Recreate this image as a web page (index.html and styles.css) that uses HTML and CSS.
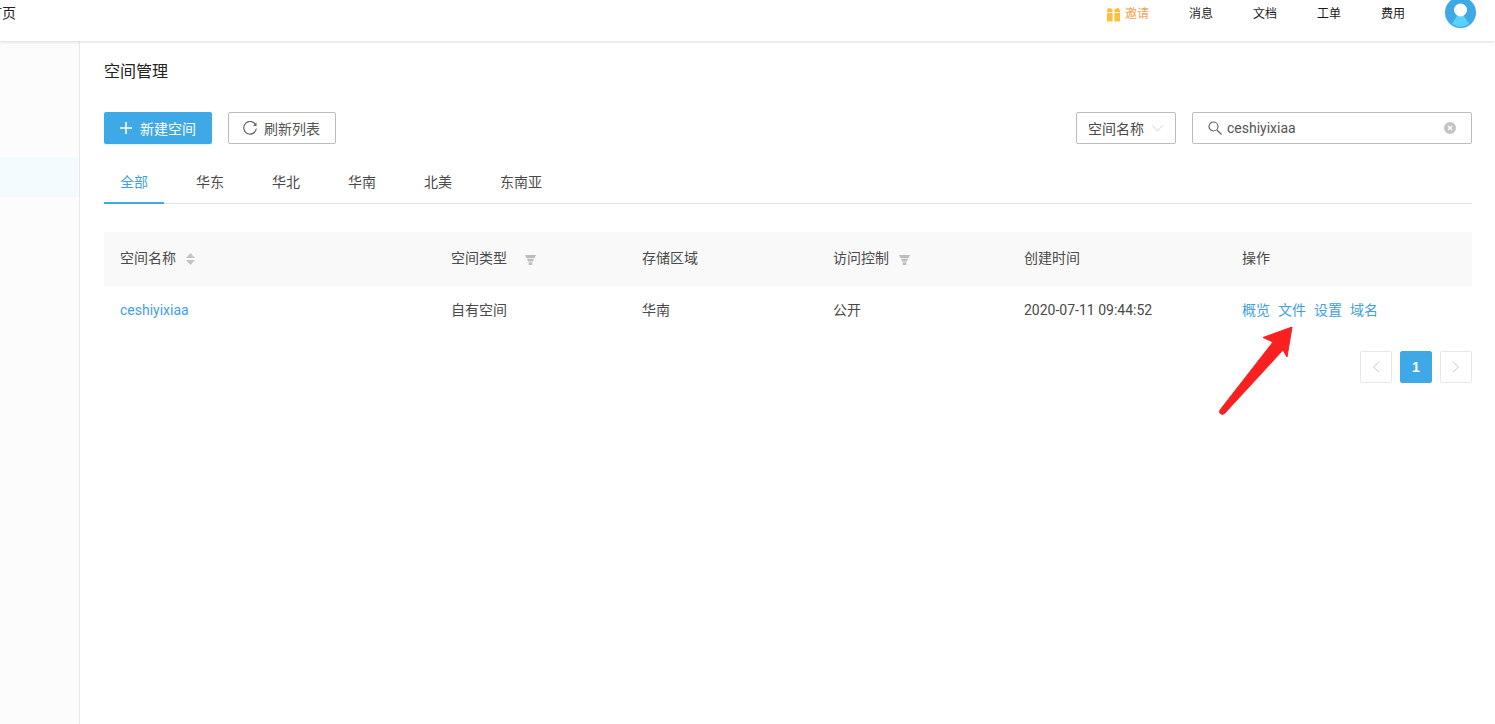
FILE: index.html
```html
<!DOCTYPE html>
<html lang="zh-CN">
<head>
  <meta charset="UTF-8" />
  <title>空间管理</title>
  <link rel="stylesheet" href="styles.css">
</head>
<body>

  <header class="topbar">
    <a class="home-link">首页</a>
    <nav class="top-nav">
      <a class="invite">
        <svg width="13" height="15" viewBox="0 0 14 15"><path fill="#fdbf3c" d="M0 6h6v9H1a1 1 0 0 1-1-1zM8 6h6v8a1 1 0 0 1-1 1H8zM2 0l4 2v3H0V3zM12 0 8 2v3h6V3z"/></svg>
        <span>邀请</span>
      </a>
      <a>消息</a>
      <a>文档</a>
      <a>工单</a>
      <a>费用</a>
      <span class="avatar">
        <svg width="31" height="31" viewBox="0 0 31 31">
          <circle cx="15.5" cy="15.5" r="15.5" fill="#3fa9e8"/>
          <path fill="#5ad2ff" d="M7 27l5-8h7l5 8a15.500 15.500 0 0 1-17 0z"/>
          <circle cx="15.500" cy="13" r="6.500" fill="#fff"/>
        </svg>
      </span>
    </nav>
  </header>

  <div class="layout">
    <aside class="sidebar">
      <div class="side-active"></div>
    </aside>

    <main class="content">
      <h1 class="page-title">空间管理</h1>

      <div class="toolbar">
        <button class="btn btn-primary">
          <svg width="12" height="12" viewBox="0 0 12 12"><path stroke="#fff" stroke-width="1.600" d="M6 0v12M0 6h12"/></svg>
          新建空间
        </button>
        <button class="btn btn-plain">
          <svg width="14" height="14" viewBox="0 0 14 14"><path fill="none" stroke="#666" stroke-width="1.200" d="M12.900 4.500A6.300 6.300 0 1 0 13.300 7.500"/><path fill="#666" d="M13.500 1.500v3.600H10z"/></svg>
          刷新列表
        </button>
        <div class="search-group">
          <div class="select">
            <span>空间名称</span>
            <svg width="11" height="7" viewBox="0 0 11 7"><path fill="none" stroke="#d4d4d4" d="M.5.500l5 5.500 5-5.500"/></svg>
          </div>
          <div class="search">
            <svg width="14" height="14" viewBox="0 0 14 14"><circle cx="5.500" cy="5.500" r="4.500" fill="none" stroke="#666" stroke-width="1.200"/><path stroke="#666" stroke-width="1.300" d="M9 9l4.500 4.500"/></svg>
            <span class="search-text">ceshiyixiaa</span>
            <svg class="search-clear" width="12" height="12" viewBox="0 0 12 12"><circle cx="6" cy="6" r="6" fill="#c4c4c4"/><path stroke="#fff" stroke-width="1.200" d="M4 4l4 4M8 4l-4 4"/></svg>
          </div>
        </div>
      </div>

      <ul class="tabs">
        <li class="tab active">全部</li>
        <li class="tab">华东</li>
        <li class="tab">华北</li>
        <li class="tab">华南</li>
        <li class="tab">北美</li>
        <li class="tab">东南亚</li>
      </ul>

      <table class="bucket-table">
        <colgroup>
          <col class="col-name"><col class="col-mid"><col class="col-mid"><col class="col-mid"><col class="col-time"><col class="col-ops">
        </colgroup>
        <thead>
          <tr>
            <th>空间名称
              <svg class="th-icon" width="9" height="12" viewBox="0 0 9 12"><path fill="#c4c4c4" d="M4.500 0 9 5H0zM0 7h9l-4.500 5z"/></svg>
            </th>
            <th>空间类型
              <svg class="th-icon th-filter" width="11" height="10" viewBox="0 0 11 10"><path fill="#bdbdbd" d="M0 0h11L9.500 3h-8zM2 3.700h7L7.800 6.500H3.200zM3.700 7.200h3.600V10H3.700z"/></svg>
            </th>
            <th>存储区域</th>
            <th>访问控制
              <svg class="th-icon" width="11" height="10" viewBox="0 0 11 10"><path fill="#bdbdbd" d="M0 0h11L9.500 3h-8zM2 3.700h7L7.800 6.500H3.200zM3.700 7.200h3.600V10H3.700z"/></svg>
            </th>
            <th>创建时间</th>
            <th>操作</th>
          </tr>
        </thead>
        <tbody>
          <tr>
            <td><a class="link">ceshiyixiaa</a></td>
            <td>自有空间</td>
            <td>华南</td>
            <td>公开</td>
            <td>2020-07-11 09:44:52</td>
            <td>
              <div class="ops">
                <a class="link">概览</a>
                <a class="link">文件</a>
                <a class="link">设置</a>
                <a class="link">域名</a>
              </div>
            </td>
          </tr>
        </tbody>
      </table>

      <div class="pager">
        <span class="page-btn">
          <svg width="8" height="12" viewBox="0 0 8 12"><path fill="none" stroke="#c9c9c9" d="M7 1 1.500 6 7 11"/></svg>
        </span>
        <span class="page-btn current">1</span>
        <span class="page-btn">
          <svg width="8" height="12" viewBox="0 0 8 12"><path fill="none" stroke="#c9c9c9" d="M1 1l5.500 5L1 11"/></svg>
        </span>
      </div>
    </main>
  </div>

  <!-- red arrow drawn on top of the screenshot -->
  <svg class="annotation" width="80" height="94" viewBox="0 0 80 94">
    <path fill="#f92020" stroke="#f92020" stroke-linejoin="round" d="M74 2 L69 32 L65 25 L7 88 Q4 91 2 88 Q1 87 2 85 L55 17 L45 12.500 Z"/>
  </svg>

</body>
</html>
```

FILE: styles.css
```css
* {
  box-sizing: border-box;
}
html, body {
  height: 100%;
}
body {
  margin: 0;
  font-family: Roboto, "Noto Sans CJK SC", sans-serif;
  font-size: 14px;
  color: #4a4a4a;
  background: white;
  overflow: hidden;
}

/* top bar */
.topbar {
  height: 41px;
  display: flex;
  justify-content: space-between;
  background: white;
  box-shadow: 0 1px 3px rgba(0, 0, 0, 0.14);
  position: relative;
  overflow: hidden;
}
.home-link {
  margin: 3px 0 0 -12px;
  line-height: 20px;
  font-size: 14px;
  color: #222;
}
.top-nav {
  display: flex;
  align-items: flex-start;
  padding-right: 19px;
}
.top-nav a {
  margin-left: 40px;
  font-size: 12px;
  line-height: 28px;
  color: #1a1a1a;
}
.top-nav .invite {
  display: flex;
  align-items: center;
  gap: 5px;
  color: #f7a24b;
}
.avatar {
  margin: -3px 0 0 40px;
  height: 31px;
}

/* page layout */
.layout {
  display: flex;
  height: 683px;
}
.sidebar {
  width: 80px;
  padding-top: 116px;
  background: #fcfcfc;
  border-right: 1px solid #e8e8e8;
}
.side-active {
  height: 40px;
  background: #f4fbff;
}
.content {
  flex: 1;
  padding: 0 23px 0 24px;
}
.page-title {
  margin: 19px 0 0;
  font-size: 16px;
  font-weight: 400;
  line-height: 24px;
  color: #222;
}

/* toolbar */
.toolbar {
  display: flex;
  margin-top: 28px;
}
.btn {
  height: 32px;
  display: flex;
  align-items: center;
  border-radius: 2px;
  font-family: inherit;
  font-size: 14px;
  padding: 0;
}
.btn-primary {
  width: 108px;
  gap: 8px;
  padding-left: 16px;
  color: white;
  background: #3fa9e8;
  border: none;
  box-shadow: 0 1px 2px rgba(63, 169, 232, 0.2);
}
.btn-plain {
  width: 108px;
  gap: 7px;
  margin-left: 16px;
  padding-left: 14px;
  color: #555;
  background: white;
  border: 1px solid #bbb;
}
.search-group {
  display: flex;
  margin-left: auto;
}
.select {
  width: 100px;
  height: 32px;
  display: flex;
  align-items: center;
  justify-content: space-between;
  padding: 0 12px 0 11px;
  border: 1px solid #bbb;
  border-radius: 2px;
}
.search {
  width: 280px;
  height: 32px;
  margin-left: 16px;
  display: flex;
  align-items: center;
  gap: 5px;
  padding: 0 15px;
  border: 1px solid #bbb;
  border-radius: 2px;
}
.search-text {
  flex: 1;
  color: #555;
}

/* tabs */
.tabs {
  list-style: none;
  display: flex;
  margin: 16px 0 0;
  padding: 0;
  height: 44px;
  border-bottom: 1px solid #e4e4e4;
}
.tab {
  padding: 0 16px;
  margin-right: 16px;
  line-height: 44px;
  height: 44px;
  color: #4a4a4a;
}
.tab.active {
  color: #3fa0e6;
  border-bottom: 2px solid #3fa9e8;
}

/* table */
.bucket-table {
  width: 100%;
  margin-top: 28px;
  border-collapse: collapse;
  table-layout: fixed;
}
.col-name { width: 331px; }
.col-mid { width: 191px; }
.col-time { width: 218px; }
.col-ops { width: 246px; }
.bucket-table th {
  height: 54px;
  padding: 0 16px 2px;
  line-height: 20px;
  text-align: left;
  font-weight: 400;
  background: #f9f9f9;
}
.bucket-table td {
  height: 49px;
  padding: 0 16px 1px;
  line-height: 20px;
}
.th-icon {
  margin-left: 7px;
  vertical-align: -2px;
}
.th-filter {
  margin-left: 15px;
}
.link {
  color: #3fa0e6;
}
.ops {
  display: flex;
  gap: 8px;
}

/* pagination */
.pager {
  display: flex;
  justify-content: flex-end;
  gap: 8px;
  margin-top: 16px;
}
.page-btn {
  width: 32px;
  height: 32px;
  display: flex;
  align-items: center;
  justify-content: center;
  border: 1px solid #e8e8e8;
  border-radius: 2px;
}
.page-btn.current {
  color: white;
  font-family: "Liberation Sans", sans-serif;
  font-weight: 700;
  background: #3fa9e8;
  border-color: #3fa9e8;
}

/* annotation */
.annotation {
  position: absolute;
  left: 1218px;
  top: 325px;
  overflow: visible;
}
```
